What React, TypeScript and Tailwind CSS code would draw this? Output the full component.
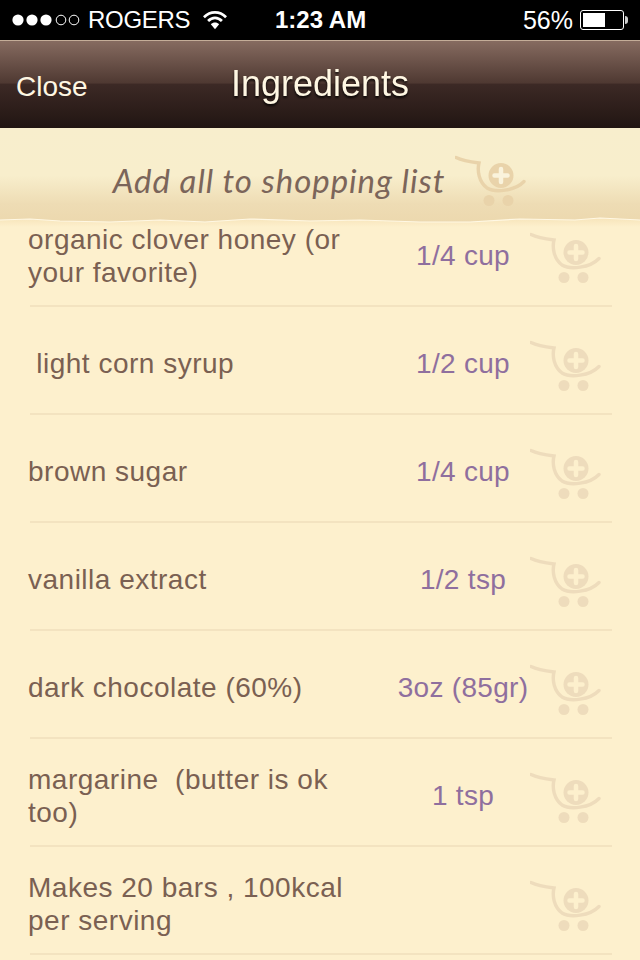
const items = [
  { name: "organic clover honey (or your favorite)", qty: "1/4 cup" },
  { name: " light corn syrup", qty: "1/2 cup" },
  { name: "brown sugar", qty: "1/4 cup" },
  { name: "vanilla extract", qty: "1/2 tsp" },
  { name: "dark chocolate (60%)", qty: "3oz (85gr)" },
  { name: "margarine  (butter is ok too)", qty: "1 tsp" },
  { name: "Makes 20 bars , 100kcal per serving", qty: "" },
];

function CartIcon({ color, plus }: { color: string; plus: string }) {
  return (
    <svg width="72" height="58" viewBox="0 0 72 58" fill="none" className="shrink-0">
      <path
        d="M1 2.5C8 6 16 7 24 8C22 16 24 27 32 33C40 38 60 36 69 26.5"
        stroke={color}
        strokeWidth="3.4"
        strokeLinecap="round"
      />
      <circle cx="46" cy="20.500" r="12.500" fill={color} />
      <path d="M46 14V27M39.500 20.500H52.500" stroke={plus} strokeWidth="4.500" strokeLinecap="round" />
      <circle cx="34" cy="45.500" r="5.500" fill={color} />
      <circle cx="53" cy="45.500" r="5.500" fill={color} />
    </svg>
  );
}

function StatusBar() {
  return (
    <div className="flex h-10 items-center bg-black text-[25px] leading-none text-white">
      <svg width="72" height="16" viewBox="0 0 72 16" className="ml-[12px] shrink-0">
        <circle cx="6" cy="8" r="5.600" fill="white" />
        <circle cx="20" cy="8" r="5.600" fill="white" />
        <circle cx="34" cy="8" r="5.600" fill="white" />
        <circle cx="49" cy="8" r="4.800" fill="none" stroke="white" strokeWidth="1" />
        <circle cx="62" cy="8" r="4.800" fill="none" stroke="white" strokeWidth="1" />
      </svg>
      <span className="ml-[4px] w-[115px] text-[24px] tracking-[-0.3px]">ROGERS</span>
      <svg width="24" height="20" viewBox="0 0 26 20" className="shrink-0">
        <path d="M1 7C8 0 18 0 25 7" stroke="white" strokeWidth="3" fill="none" />
        <path d="M5.500 11C10 6.500 16 6.500 20.500 11" stroke="white" strokeWidth="3" fill="none" />
        <path d="M13 20L8.500 14.500C11 12 15 12 17.500 14.500Z" fill="white" />
      </svg>
      <span className="ml-[48px] w-[90px] whitespace-nowrap text-[24px] font-bold">1:23 AM</span>
      <span className="ml-auto">56%</span>
      <div className="ml-[7px] mr-[12px] flex items-center">
        <div className="h-[20px] w-[44px] rounded-[3px] border border-white p-[2px]">
          <div className="h-full w-[22px] bg-white" />
        </div>
        <div className="ml-[1px] h-[8px] w-[3px] rounded-r-sm bg-white/80" />
      </div>
    </div>
  );
}

function NavBar() {
  return (
    <div className="relative flex h-[88px] items-center border-t border-[#c4ad98] bg-[linear-gradient(#866b60_0%,#4f3932_48%,#3c2925_50%,#211512_100%)] text-[#fff7e3]">
      <span className="ml-[16px] mt-[4px] text-[28px] leading-none">Close</span>
      <span className="absolute inset-x-0 top-[25px] text-center text-[36px] leading-none drop-shadow-[0_2px_1px_rgba(0,0,0,0.8)]">
        Ingredients
      </span>
    </div>
  );
}

function PaperHeader() {
  return (
    <div className="relative z-10 h-[95px] bg-[linear-gradient(#f8eecd_0%,#f8eecc_50%,#eedcb4_80%,#ecd8ae_100%)]">
      <div className="flex h-[84px] items-center justify-center gap-[10px] pt-[20px]">
        <span className="font-['Lato'] text-[33px] italic leading-none tracking-[0.95px] text-[#7b655a]">
          Add all to shopping list
        </span>
        <div className="mt-[7px]">
          <CartIcon color="#e9d3aa" plus="#faf3dc" />
        </div>
      </div>
      <svg
        viewBox="0 0 640 12"
        preserveAspectRatio="none"
        className="absolute bottom-[-4px] left-0 h-[12px] w-full"
      >
        <defs>
          <linearGradient id="tornShadow" x1="0" y1="0" x2="0" y2="1">
            <stop offset="0" stopColor="#f7e4ba" />
            <stop offset="1" stopColor="#fdf0cd" />
          </linearGradient>
        </defs>
        <path
          d="M0 5L30 4L60 6L110 7L160 5L205 7L250 4L310 6L360 5L420 7L470 7L520 4L575 5L600 3L640 5V12H0Z"
          fill="url(#tornShadow)"
        />
        <path
          d="M0 5L30 4L60 6L110 7L160 5L205 7L250 4L310 6L360 5L420 7L470 7L520 4L575 5L600 3L640 5"
          fill="none"
          stroke="#fff8e4"
          strokeWidth="1.200"
        />
      </svg>
    </div>
  );
}

export default function App() {
  return (
    <div className="mx-auto h-[960px] w-[640px] overflow-hidden bg-[#fdf0cd] font-['Liberation_Sans',Arial,sans-serif]">
      <StatusBar />
      <NavBar />
      <PaperHeader />
      <div className="-mt-[24px]">
        {items.map((item) => (
          <div key={item.name} className="h-[108px]">
            <div className="flex h-[106px] items-center">
              <div className="w-[396px] whitespace-pre-wrap pl-[28px] pr-[50px] pt-[7px] text-[28px] leading-[33px] tracking-[0.5px] text-[#7a6052]">
                {item.name}
              </div>
              <div className="w-[134px] whitespace-nowrap pt-[7px] text-center text-[28px] tracking-[0.3px] text-[#8f6f9e]">
                {item.qty}
              </div>
              <div className="mt-[17px]">
                <CartIcon color="#eedcbc" plus="#fdf0cd" />
              </div>
            </div>
            <div className="ml-[30px] mr-[28px] h-[2px] bg-[#f3e3c0]" />
          </div>
        ))}
      </div>
    </div>
  );
}
